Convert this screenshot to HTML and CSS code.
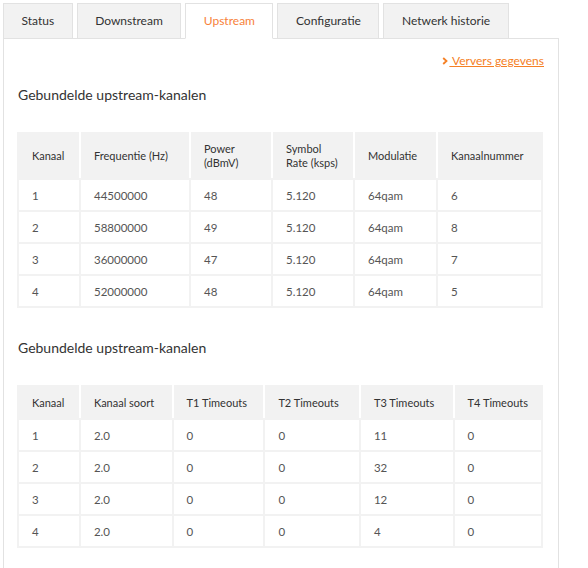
FILE: index.html
```html
<!DOCTYPE html>
<html lang="nl">
<head>
  <meta charset="UTF-8">
  <title>Upstream</title>
  <link rel="stylesheet" href="styles.css">
</head>
<body>
  <div class="page">
    <!-- tabbladen -->
    <div class="tabs">
      <div class="tab">Status</div>
      <div class="tab">Downstream</div>
      <div class="tab active">Upstream</div>
      <div class="tab">Configuratie</div>
      <div class="tab">Netwerk historie</div>
    </div>

    <div class="panel">
      <div class="refresh">
        <a href="#">
          <svg class="chevron" width="6" height="8" viewBox="0 0 6 8"><polyline points="1.2,1 4.5,4 1.2,7" fill="none" stroke="#f58025" stroke-width="1.8"/></svg>
          <span>Ververs gegevens</span>
        </a>
      </div>

      <h3>Gebundelde upstream-kanalen</h3>
      <table class="data-table channels">
        <tr>
          <th>Kanaal</th>
          <th>Frequentie (Hz)</th>
          <th>Power<br>(dBmV)</th>
          <th>Symbol<br>Rate (ksps)</th>
          <th>Modulatie</th>
          <th>Kanaalnummer</th>
        </tr>
        <tr><td>1</td><td>44500000</td><td>48</td><td>5.120</td><td>64qam</td><td>6</td></tr>
        <tr><td>2</td><td>58800000</td><td>49</td><td>5.120</td><td>64qam</td><td>8</td></tr>
        <tr><td>3</td><td>36000000</td><td>47</td><td>5.120</td><td>64qam</td><td>7</td></tr>
        <tr><td>4</td><td>52000000</td><td>48</td><td>5.120</td><td>64qam</td><td>5</td></tr>
      </table>

      <h3>Gebundelde upstream-kanalen</h3>
      <table class="data-table timeouts">
        <tr>
          <th>Kanaal</th>
          <th>Kanaal soort</th>
          <th>T1 Timeouts</th>
          <th>T2 Timeouts</th>
          <th>T3 Timeouts</th>
          <th>T4 Timeouts</th>
        </tr>
        <tr><td>1</td><td>2.0</td><td>0</td><td>0</td><td>11</td><td>0</td></tr>
        <tr><td>2</td><td>2.0</td><td>0</td><td>0</td><td>32</td><td>0</td></tr>
        <tr><td>3</td><td>2.0</td><td>0</td><td>0</td><td>12</td><td>0</td></tr>
        <tr><td>4</td><td>2.0</td><td>0</td><td>0</td><td>4</td><td>0</td></tr>
      </table>
    </div>
  </div>
</body>
</html>
```

FILE: styles.css
```css
body {
  margin: 0;
  font-family: Lato, "Open Sans", sans-serif;
  color: #333;
  background: #fff;
}
.page {
  padding: 3px 0 0 3px;
  width: 556px;
}
.tabs {
  display: flex;
  gap: 4px;
}
.tab {
  position: relative;
  height: 34px;
  line-height: 34px;
  padding: 0 17.5px;
  margin-bottom: -1px;
  font-size: 12px;
  color: #333;
  background: #f2f2f2;
  border: 1px solid #e2e2e2;
}
.tab.active {
  background: #fff;
  color: #f7813a;
  border-bottom-color: #fff;
}
.panel {
  border: 1px solid #e2e2e2;
  padding: 14px 14px 40px 13px;
}
.refresh {
  text-align: right;
  font-size: 12px;
  line-height: 16px;
}
.refresh a {
  color: #f58025;
}
.refresh .chevron {
  margin-right: 1px;
}
.refresh span {
  text-decoration: underline;
}
h3 {
  margin: 16px 0 27px 1px;
  font-size: 14px;
  font-weight: normal;
  line-height: 20px;
  color: #333;
}
.data-table {
  width: 526px;
  border-collapse: collapse;
  margin-bottom: 30px;
}
.data-table th {
  background: #f2f2f2;
  border: 2px solid #f2f2f2;
  border-right-color: #fff;
  text-align: left;
  font-weight: normal;
  font-size: 11px;
  line-height: 14px;
  padding: 8px 13px;
  color: #333;
  white-space: nowrap;
}
.data-table th:last-child {
  border-right-color: #f2f2f2;
}
.data-table td {
  border: 2px solid #f2f2f2;
  height: 30px;
  padding: 0 13px;
  font-size: 11.5px;
  color: #555;
  white-space: nowrap;
}
.timeouts th {
  height: 15px;
}
.channels th:nth-child(1) { width: 34px; }
.channels th:nth-child(2) { width: 82px; }
.channels th:nth-child(3) { width: 54px; }
.channels th:nth-child(4) { width: 54px; }
.channels th:nth-child(5) { width: 55px; }
.timeouts th:nth-child(1) { width: 34px; }
.timeouts th:nth-child(2) { width: 65px; }
.timeouts th:nth-child(3) { width: 64px; }
.timeouts th:nth-child(4) { width: 68px; }
.timeouts th:nth-child(5) { width: 66px; }
```
